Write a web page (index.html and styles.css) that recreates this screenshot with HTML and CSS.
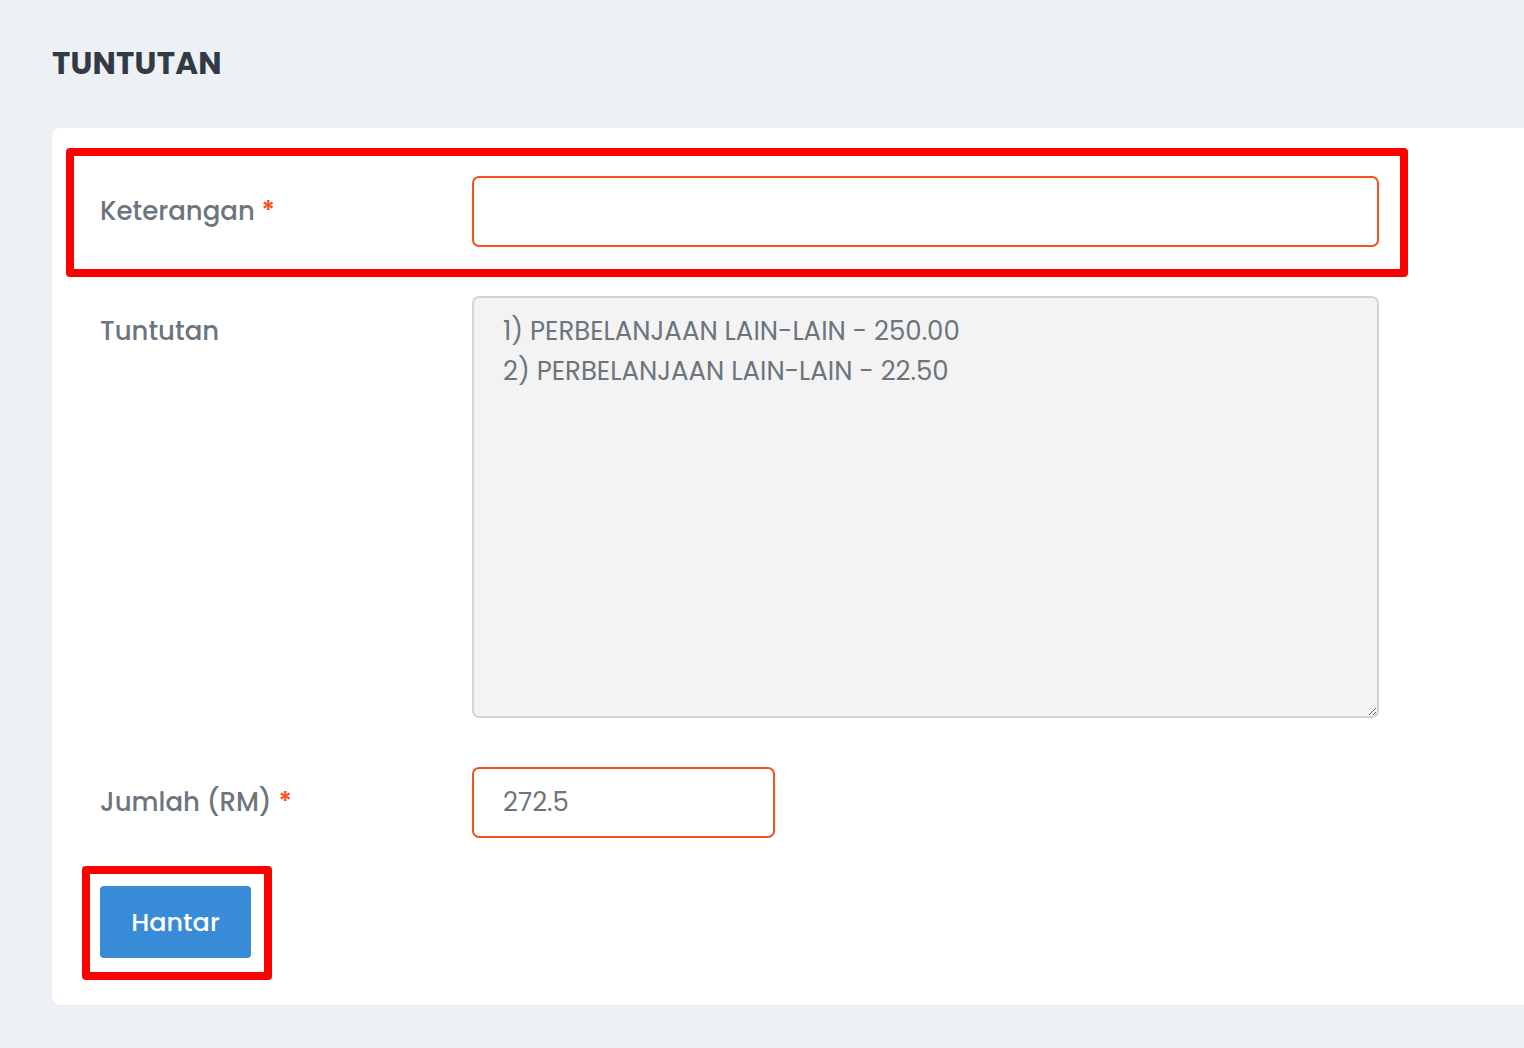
FILE: index.html
```html
<!DOCTYPE html>
<html lang="ms">
<head>
<meta charset="utf-8">
<title>Tuntutan</title>
<link rel="stylesheet" href="styles.css">
</head>
<body>
<main class="page">
  <h1 class="page-title">TUNTUTAN</h1>
  <section class="card">
    <form class="form">
      <div class="row highlight-row">
        <label class="label" for="keterangan">Keterangan <span class="req">*</span></label>
        <input class="input input-wide input-required" id="keterangan" type="text">
      </div>
      <div class="row">
        <label class="label" for="tuntutan">Tuntutan</label>
        <textarea class="textarea" id="tuntutan" readonly>1) PERBELANJAAN LAIN-LAIN - 250.00
2) PERBELANJAAN LAIN-LAIN - 22.50</textarea>
      </div>
      <div class="row">
        <label class="label" for="jumlah">Jumlah (RM) <span class="req">*</span></label>
        <input class="input input-short input-required" id="jumlah" type="text" value="272.5">
      </div>
      <div class="actions">
        <button class="btn highlight-btn" type="button">Hantar</button>
      </div>
    </form>
  </section>
</main>
</body>
</html>
```

FILE: styles.css
```css
* { box-sizing: border-box; }
html, body {
  margin: 0;
  padding: 0;
  background: #edf1f5;
  overflow: hidden;
  height: 100%;
}
body {
  font-family: "Poppins", "Inter", "Noto Sans", sans-serif;
  color: #6c757d;
}
.page {
  padding: 40px 0 0 52px;
}
.page-title {
  margin: 0;
  font-size: 31px;
  line-height: 46px;
  font-weight: 700;
  color: #323a46;
  letter-spacing: 0.2px;
}
.card {
  margin-top: 42px;
  margin-right: -60px;
  background: #ffffff;
  border-radius: 8px;
  box-shadow: 0 1px 2px rgba(0, 0, 0, 0.04);
  padding: 48px 48px 47px 48px;
}
.form {
  display: flex;
  flex-direction: column;
  gap: 49px;
}
.row {
  display: flex;
  align-items: flex-start;
  position: relative;
  width: 1279px;
}
.label {
  width: 372px;
  flex: none;
  font-size: 26px;
  font-weight: 500;
  line-height: 40px;
  padding-top: 15px;
  color: #6c757d;
}
.req {
  color: #f4511e;
  font-weight: 600;
}
.input {
  height: 71px;
  border: 2px solid #ced4da;
  border-radius: 7px;
  padding: 0 29px;
  font-family: inherit;
  font-size: 26px;
  color: #6c757d;
  background: #fff;
  outline: none;
}
.input-required {
  border-color: #f4511e;
}
.input-wide { width: 907px; }
.input-short { width: 303px; }
.textarea {
  width: 907px;
  height: 422px;
  border: 2px solid #d0d5db;
  border-radius: 7px;
  background: #f3f3f3;
  padding: 13px 29px;
  font-family: inherit;
  font-size: 26px;
  line-height: 40px;
  color: #6c757d;
  resize: vertical;
  outline: none;
}
.highlight-row::after {
  content: "";
  position: absolute;
  left: -34px;
  top: -28px;
  right: -29px;
  bottom: -30px;
  border: 8px solid #ff0000;
  border-radius: 4px;
  pointer-events: none;
}
.actions {
  display: flex;
  margin-top: -1px;
}
.btn {
  position: relative;
  width: 151px;
  height: 72px;
  border: none;
  border-radius: 4px;
  background: #388bd6;
  color: #ffffff;
  font-family: inherit;
  font-size: 25.5px;
  font-weight: 500;
  cursor: pointer;
}
.highlight-btn::after {
  content: "";
  position: absolute;
  left: -18px;
  top: -20px;
  right: -21px;
  bottom: -22px;
  border: 8px solid #ff0000;
  border-radius: 4px;
  pointer-events: none;
}
```
